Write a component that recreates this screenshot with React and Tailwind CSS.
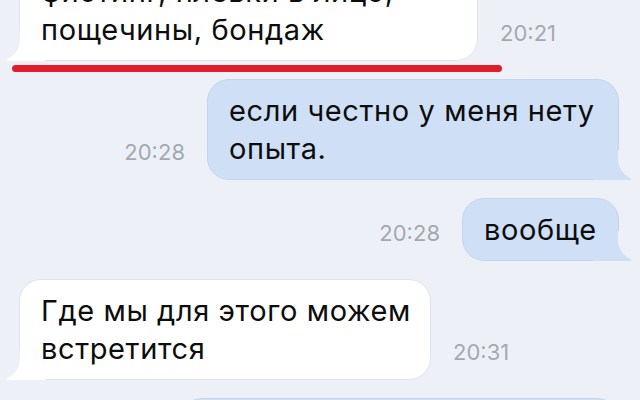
import React from 'react'

const messages = [
  { id: 1, out: false, lines: ['фистинг, плевки в лицо,', 'пощечины, бондаж'], time: '20:21', width: 'w-[459px]' },
  { id: 2, out: true, lines: ['если честно у меня нету', 'опыта.'], time: '20:28', width: 'w-[412px]' },
  { id: 3, out: true, lines: ['вообще'], time: '20:28', width: 'w-[157px]' },
  { id: 4, out: false, lines: ['Где мы для этого можем', 'встретится'], time: '20:31', width: 'w-[412px]' },
]

// bubble tail: a filled block carved by a page-coloured block with a rounded corner
function Tail({ out }) {
  if (out) {
    return (
      <>
        <div className="absolute bottom-[-1px] right-[-13px] h-[26px] w-[38px] bg-[#cfe0f6]" />
        <div className="absolute bottom-[-1px] right-[-34px] h-[30px] w-[34px] rounded-bl-[21px] bg-[#edf1f7]" />
      </>
    )
  }
  return (
    <>
      <div className="absolute bottom-[-1px] left-[-13px] h-[26px] w-[38px] bg-white" />
      <div className="absolute bottom-[-1px] left-[-34px] h-[30px] w-[34px] rounded-br-[21px] bg-[#edf1f7]" />
    </>
  )
}

function Bubble({ out, width, lines }) {
  return (
    <div
      className={
        'relative rounded-[22px] border px-[21px] pt-[12px] pb-[11px] text-[29px] leading-[38px] tracking-[0.6px] text-[#0d0d0d] ' +
        width +
        (out ? ' bg-[#cfe0f6] border-[#c3d5ee]' : ' bg-white border-[#dfe4ec]')
      }
    >
      <Tail out={out} />
      <div className="relative whitespace-nowrap">
        {lines.map((l) => (
          <div key={l}>{l}</div>
        ))}
      </div>
    </div>
  )
}

function Time({ children }) {
  return <span className="mb-[16px] text-[22px] leading-[24px] text-[#a4a9b1]">{children}</span>
}

export default function App() {
  return (
    <div
      className="relative h-[400px] w-[640px] overflow-hidden bg-[#edf1f7]"
      style={{ fontFamily: 'Inter, "Noto Sans", sans-serif' }}
    >
      <div className="mt-[-40px] flex flex-col gap-[18px]">
        {messages.map((m) =>
          m.out ? (
            <div key={m.id} className="flex items-end justify-end gap-[22px] pr-[21px]">
              <Time>{m.time}</Time>
              <Bubble out width={m.width} lines={m.lines} />
            </div>
          ) : (
            <div key={m.id} className="flex items-end gap-[22px] pl-[19px]">
              <Bubble width={m.width} lines={m.lines} />
              <Time>{m.time}</Time>
            </div>
          )
        )}
        <div className="flex justify-end pr-[21px]">
          <div className="h-[100px] w-[439px] rounded-[22px] border border-[#c3d5ee] bg-[#cfe0f6]" />
        </div>
      </div>

      {/* red marker line drawn over the screenshot */}
      <div className="absolute left-[12px] top-[65px] h-[7px] w-[490px] rounded-full bg-[#e11d2b]" />
    </div>
  )
}
